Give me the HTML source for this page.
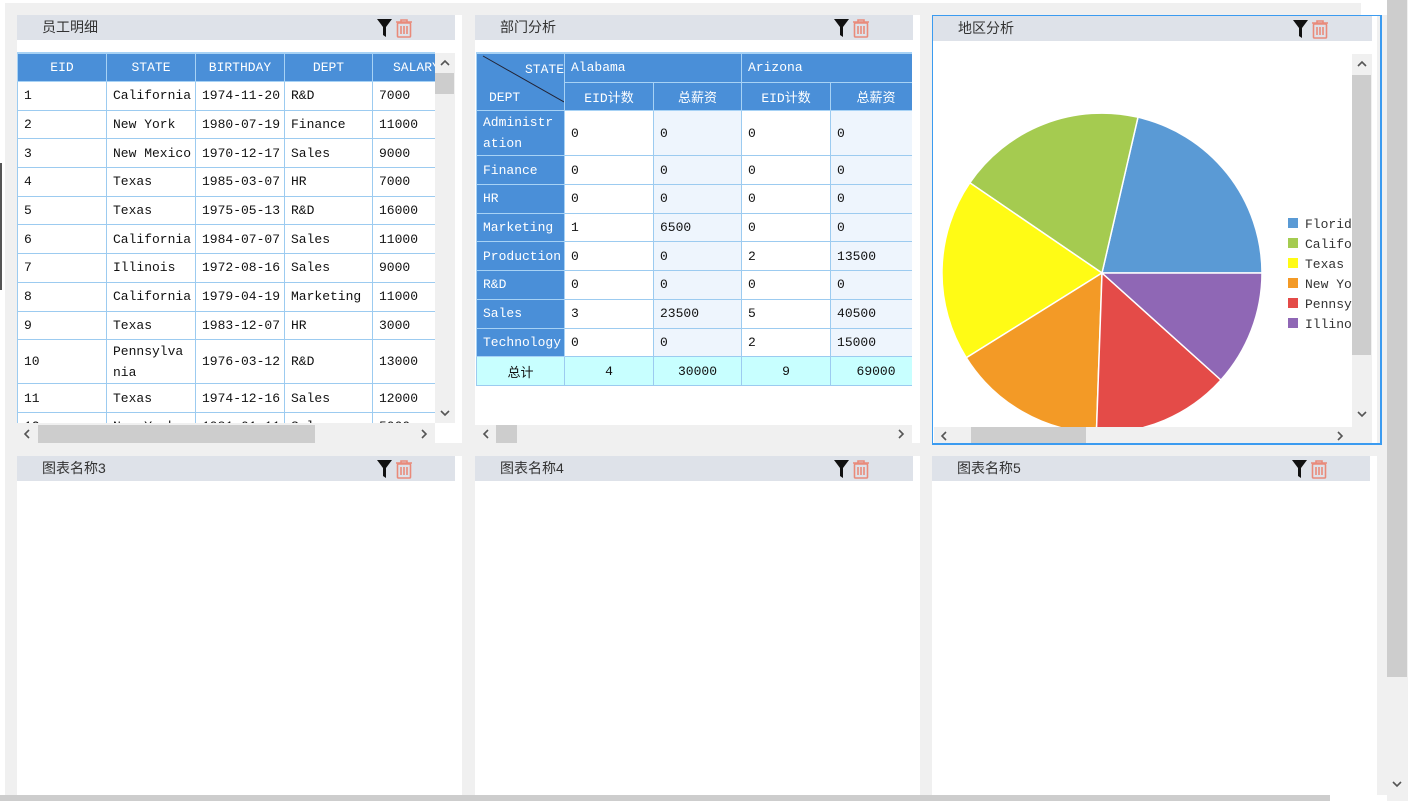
<!DOCTYPE html>
<html><head><meta charset="utf-8"><style>
*{box-sizing:border-box;margin:0;padding:0}
body{width:1408px;height:801px;overflow:hidden;background:#fff;position:relative;font-family:"Liberation Mono","Noto Sans CJK SC",monospace;font-size:13px;color:#111}
.a{position:absolute}
.hd{position:absolute;height:25px;background:#dee2e9;font-family:"Liberation Sans","Noto Sans CJK SC",sans-serif;font-size:14px;color:#333;padding-left:25px;line-height:24px}
.ic{position:absolute;top:4px}
table{border-collapse:collapse;table-layout:fixed}
td{border:1px solid #9ccbf0;padding:0 6px;white-space:nowrap;overflow:hidden}
.t1 th{background:#4a8fd8;color:#fff;font-weight:normal;border:1px solid #a7d2f5;height:28px}
.t1 td{height:28.7px}
.t2 td.h{background:#4a8fd8;color:#fff;border-color:#a7d2f5}
.t2 td{height:28.7px}
.t2 td.c2{background:#eef5fd}
.sb{position:absolute;background:#f0f0f0}
.th{position:absolute;background:#cdcdcd}
.ch{position:absolute;width:10px;height:10px}
</style></head><body>
<svg width="0" height="0" style="position:absolute"><defs>
<g id="icons"><path d="M1 0H16L10 8V18L7 16V8Z" fill="#111"/>
<g transform="translate(19,0)" fill="none" stroke="#e98a7a" stroke-width="1.6"><path d="M1 3H17M6 3V1H12V3"/><rect x="2.5" y="4" width="13" height="14" rx="1"/><path d="M6 7V15M9 7V15M12 7V15"/></g></g>
<path id="cu" d="M1 7L5 3L9 7" fill="none" stroke="#555" stroke-width="1.6"/>
<path id="cd" d="M1 3L5 7L9 3" fill="none" stroke="#555" stroke-width="1.6"/>
<path id="cl" d="M7 1L3 5L7 9" fill="none" stroke="#555" stroke-width="1.6"/>
<path id="cr" d="M3 1L7 5L3 9" fill="none" stroke="#555" stroke-width="1.6"/>
</defs></svg>
<div class="a" style="left:5px;top:3px;width:1356px;height:792px;background:#f0f0f0"></div>
<div class="a" style="left:1361px;top:15px;width:26px;height:780px;background:#f0f0f0"></div>
<div class="a" style="left:0;top:163px;width:2px;height:127px;background:#555"></div>

<div class="a" style="left:17px;top:15px;width:445px;height:428px;background:#fff"></div>
<div class="a" style="left:475px;top:15px;width:445px;height:428px;background:#fff"></div>
<div class="a" style="left:932px;top:15px;width:445px;height:430px;background:#fff"></div>
<div class="a" style="left:17px;top:456px;width:445px;height:339px;background:#fff"></div>
<div class="a" style="left:475px;top:456px;width:445px;height:339px;background:#fff"></div>
<div class="a" style="left:932px;top:456px;width:445px;height:339px;background:#fff"></div>

<div class="hd" style="left:17px;top:15px;width:438px">员工明细<svg class="ic" style="left:359px" width="38" height="19"><use href="#icons"/></svg></div>
<div class="hd" style="left:475px;top:15px;width:438px">部门分析<svg class="ic" style="left:358px" width="38" height="19"><use href="#icons"/></svg></div>
<div class="hd" style="left:933px;top:16px;width:439px">地区分析<svg class="ic" style="left:359px" width="38" height="19"><use href="#icons"/></svg></div>
<div class="hd" style="left:17px;top:456px;width:438px">图表名称3<svg class="ic" style="left:359px" width="38" height="19"><use href="#icons"/></svg></div>
<div class="hd" style="left:475px;top:456px;width:438px">图表名称4<svg class="ic" style="left:358px" width="38" height="19"><use href="#icons"/></svg></div>
<div class="hd" style="left:932px;top:456px;width:438px">图表名称5<svg class="ic" style="left:359px" width="38" height="19"><use href="#icons"/></svg></div>

<div class="a" style="left:17px;top:52px;width:418px;height:371px;overflow:hidden;border-top:1px solid #a7d2f5">
<table class="t1" style="width:460px">
<colgroup><col style="width:89px"><col style="width:89px"><col style="width:89px"><col style="width:88px"><col style="width:105px"></colgroup>
<tr><th>EID</th><th>STATE</th><th>BIRTHDAY</th><th>DEPT</th><th style="text-align:left;padding-left:20px">SALARY</th></tr>
<tr><td>1</td><td>California</td><td>1974-11-20</td><td>R&amp;D</td><td>7000</td></tr>
<tr><td>2</td><td>New York</td><td>1980-07-19</td><td>Finance</td><td>11000</td></tr>
<tr><td>3</td><td>New Mexico</td><td>1970-12-17</td><td>Sales</td><td>9000</td></tr>
<tr><td>4</td><td>Texas</td><td>1985-03-07</td><td>HR</td><td>7000</td></tr>
<tr><td>5</td><td>Texas</td><td>1975-05-13</td><td>R&amp;D</td><td>16000</td></tr>
<tr><td>6</td><td>California</td><td>1984-07-07</td><td>Sales</td><td>11000</td></tr>
<tr><td>7</td><td>Illinois</td><td>1972-08-16</td><td>Sales</td><td>9000</td></tr>
<tr><td>8</td><td>California</td><td>1979-04-19</td><td>Marketing</td><td>11000</td></tr>
<tr><td>9</td><td>Texas</td><td>1983-12-07</td><td>HR</td><td>3000</td></tr>
<tr><td style="height:44px">10</td><td style="white-space:normal;word-break:break-all;line-height:21px">Pennsylvania</td><td>1976-03-12</td><td>R&amp;D</td><td>13000</td></tr>
<tr><td>11</td><td>Texas</td><td>1974-12-16</td><td>Sales</td><td>12000</td></tr>
<tr><td>12</td><td>New York</td><td>1981-01-11</td><td>Sales</td><td>5000</td></tr>
</table></div>
<div class="sb" style="left:435px;top:53px;width:20px;height:370px"></div>
<div class="th" style="left:435px;top:73px;width:19px;height:21px"></div>
<svg class="ch" style="left:440px;top:58px"><use href="#cu"/></svg>
<svg class="ch" style="left:440px;top:408px"><use href="#cd"/></svg>
<div class="sb" style="left:17px;top:423px;width:418px;height:20px"></div>
<div class="th" style="left:38px;top:425px;width:277px;height:18px"></div>
<svg class="ch" style="left:22px;top:429px"><use href="#cl"/></svg>
<svg class="ch" style="left:419px;top:429px"><use href="#cr"/></svg>

<div class="a" style="left:476px;top:52px;width:436px;height:340px;overflow:hidden;border-top:1px solid #a7d2f5">
<table class="t2" style="width:445px">
<colgroup><col style="width:88px"><col style="width:89px"><col style="width:88px"><col style="width:89px"><col style="width:91px"></colgroup>
<tr><td class="h" rowspan="2" style="height:57px;position:relative;padding:0"><svg class="a" style="left:0;top:0" width="88" height="57"><line x1="6" y1="2" x2="87" y2="48" stroke="#223" stroke-width="1"/></svg><span class="a" style="right:0;top:8px">STATE</span><span class="a" style="left:12px;top:36px">DEPT</span></td><td class="h" colspan="2">Alabama</td><td class="h" colspan="2">Arizona</td></tr>
<tr><td class="h" style="text-align:center">EID计数</td><td class="h" style="text-align:center">总薪资</td><td class="h" style="text-align:center">EID计数</td><td class="h" style="text-align:center">总薪资</td></tr>
<tr><td class="h" style="height:45px;white-space:normal;word-break:break-all;line-height:21px">Administration</td><td>0</td><td class="c2">0</td><td>0</td><td class="c2">0</td></tr>
<tr><td class="h">Finance</td><td>0</td><td class="c2">0</td><td>0</td><td class="c2">0</td></tr>
<tr><td class="h">HR</td><td>0</td><td class="c2">0</td><td>0</td><td class="c2">0</td></tr>
<tr><td class="h">Marketing</td><td>1</td><td class="c2">6500</td><td>0</td><td class="c2">0</td></tr>
<tr><td class="h">Production</td><td>0</td><td class="c2">0</td><td>2</td><td class="c2">13500</td></tr>
<tr><td class="h">R&amp;D</td><td>0</td><td class="c2">0</td><td>0</td><td class="c2">0</td></tr>
<tr><td class="h">Sales</td><td>3</td><td class="c2">23500</td><td>5</td><td class="c2">40500</td></tr>
<tr><td class="h">Technology</td><td>0</td><td class="c2">0</td><td>2</td><td class="c2">15000</td></tr>
<tr style="background:#c8ffff;text-align:center"><td>总计</td><td>4</td><td>30000</td><td>9</td><td>69000</td></tr>
</table></div>
<div class="sb" style="left:475px;top:425px;width:437px;height:18px"></div>
<div class="th" style="left:496px;top:425px;width:21px;height:18px"></div>
<svg class="ch" style="left:481px;top:429px"><use href="#cl"/></svg>
<svg class="ch" style="left:896px;top:429px"><use href="#cr"/></svg>

<div class="a" style="left:934px;top:41px;width:418px;height:386px;overflow:hidden">
<svg width="418" height="386" style="position:absolute;left:0;top:0">
<g transform="translate(-934,-41)" stroke="#fff" stroke-width="1.5">
<path d="M1102 273L1262 273A160 160 0 0 0 1138 117.2Z" fill="#5a9ad5"/>
<path d="M1102 273L1138 117.2A160 160 0 0 0 969.8 182.8Z" fill="#a5cb50"/>
<path d="M1102 273L969.8 182.8A160 160 0 0 0 966.3 357.8Z" fill="#fffb15"/>
<path d="M1102 273L966.3 357.8A160 160 0 0 0 1096.4 432.9Z" fill="#f39a26"/>
<path d="M1102 273L1096.4 432.9A160 160 0 0 0 1220.9 380Z" fill="#e44b48"/>
<path d="M1102 273L1220.9 380A160 160 0 0 0 1262 273Z" fill="#8f67b5"/>
<g stroke="none"><rect x="1288" y="218" width="10" height="10" fill="#5a9ad5"/><rect x="1288" y="238" width="10" height="10" fill="#a5cb50"/><rect x="1288" y="258" width="10" height="10" fill="#fffb15"/><rect x="1288" y="278" width="10" height="10" fill="#f39a26"/><rect x="1288" y="298" width="10" height="10" fill="#e44b48"/><rect x="1288" y="318" width="10" height="10" fill="#8f67b5"/>
<g fill="#333" font-family="Liberation Mono" font-size="13"><text x="1305" y="228">Florida</text><text x="1305" y="248">California</text><text x="1305" y="268">Texas</text><text x="1305" y="288">New York</text><text x="1305" y="308">Pennsylvania</text><text x="1305" y="328">Illinois</text></g></g>
</g></svg></div>
<div class="sb" style="left:1352px;top:54px;width:20px;height:373px"></div>
<div class="th" style="left:1352px;top:75px;width:19px;height:280px"></div>
<svg class="ch" style="left:1357px;top:59px"><use href="#cu"/></svg>
<svg class="ch" style="left:1357px;top:409px"><use href="#cd"/></svg>
<div class="sb" style="left:934px;top:427px;width:438px;height:18px"></div>
<div class="th" style="left:971px;top:427px;width:115px;height:18px"></div>
<svg class="ch" style="left:939px;top:431px"><use href="#cl"/></svg>
<svg class="ch" style="left:1335px;top:431px"><use href="#cr"/></svg>
<div class="a" style="left:932px;top:15px;width:450px;height:430px;border:2px solid #3b9bf0;border-top-width:1px;border-left-width:1px"></div>

<div class="a" style="left:1387px;top:0;width:21px;height:801px;background:#f0f0f0"></div>
<div class="th" style="left:1387px;top:0;width:20px;height:677px"></div>
<svg class="ch" style="left:1392px;top:779px"><use href="#cd"/></svg>
<div class="th" style="left:0;top:795px;width:1330px;height:6px"></div>
</body></html>
